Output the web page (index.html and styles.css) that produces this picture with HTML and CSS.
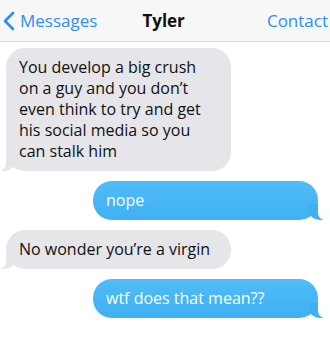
FILE: index.html
```html
<!DOCTYPE html>
<html lang="en">
<head>
    <meta charset="UTF-8">
    <meta name="viewport" content="width=device-width, initial-scale=1.0">
    <title>Tyler</title>
    <link rel="stylesheet" href="styles.css">
</head>
<body>
    <div class="header">
        <div class="back">
            <svg class="chevron" width="12" height="20" viewBox="0 0 12 20">
                <polyline points="10,2 2,10 10,18" fill="none" stroke="#2e8ef5" stroke-width="2.6" stroke-linecap="round" stroke-linejoin="round"/>
            </svg>
            <span>Messages</span>
        </div>
        <div class="title">Tyler</div>
        <div class="contact">Contact</div>
    </div>

    <div class="chat">
        <div class="bubble them">You develop a big crush on a guy and you don’t even think to try and get his social media so you can stalk him</div>
        <div class="bubble me">nope</div>
        <div class="bubble them">No wonder you’re a virgin</div>
        <div class="bubble me">wtf does that mean??</div>
    </div>
</body>
</html>
```

FILE: styles.css
```css
body {
    margin: 0;
    background-color: #fff;
    font-family: 'Open Sans', sans-serif;
    overflow: hidden;
}
.header {
    height: 41px;
    display: flex;
    align-items: center;
    background-color: #f7f7f7;
    border-bottom: 1px solid #d9d9d9;
    font-size: 17px;
    white-space: nowrap;
}
.back {
    display: flex;
    align-items: center;
    gap: 5px;
    padding-left: 3px;
    color: #2e8ef5;
}
.chevron {
    display: block;
}
.title {
    margin-left: 45px;
    font-weight: bold;
    color: #111;
}
.contact {
    margin-left: auto;
    padding-right: 2px;
    color: #2e8ef5;
}
.chat {
    display: flex;
    flex-direction: column;
    gap: 10px;
    padding: 6px 0;
}
.bubble {
    position: relative;
    width: 225px;
    box-sizing: border-box;
    padding: 9px 20px 9px 13px;
    border-radius: 19px;
    font-size: 16px;
    line-height: 21px;
}
.bubble::before,
.bubble::after {
    content: "";
    position: absolute;
    bottom: 0;
    height: 16px;
}
.them {
    align-self: flex-start;
    margin-left: 6px;
    background-color: #e5e5ea;
    color: #111;
}
.them::before {
    left: -5px;
    width: 14px;
    background-color: #e5e5ea;
    border-bottom-right-radius: 11px 9px;
}
.them::after {
    left: -16px;
    width: 16px;
    background-color: #fff;
    border-bottom-right-radius: 7px;
}
.me {
    align-self: flex-end;
    margin-right: 12px;
    background: linear-gradient(#50bcf8, #40b0f2);
    color: #fff;
}
.me::before {
    right: -5px;
    width: 14px;
    background-color: #40b0f2;
    border-bottom-left-radius: 11px 9px;
}
.me::after {
    right: -16px;
    width: 16px;
    background-color: #fff;
    border-bottom-left-radius: 7px;
}
```
